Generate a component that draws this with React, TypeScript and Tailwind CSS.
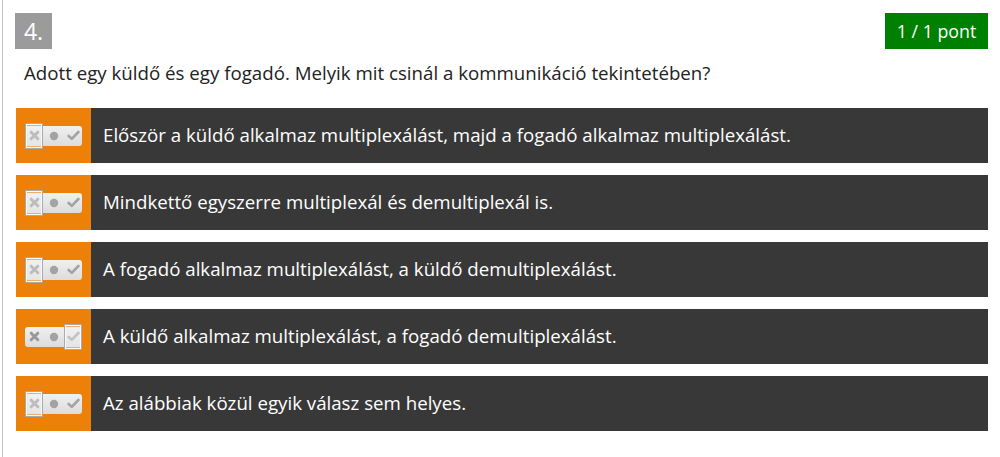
import React from 'react';

type Answer = { text: string; state: 'no' | 'yes' };

const answers: Answer[] = [
  { text: 'Először a küldő alkalmaz multiplexálást, majd a fogadó alkalmaz multiplexálást.', state: 'no' },
  { text: 'Mindkettő egyszerre multiplexál és demultiplexál is.', state: 'no' },
  { text: 'A fogadó alkalmaz multiplexálást, a küldő demultiplexálást.', state: 'no' },
  { text: 'A küldő alkalmaz multiplexálást, a fogadó demultiplexálást.', state: 'yes' },
  { text: 'Az alábbiak közül egyik válasz sem helyes.', state: 'no' },
];

function Cross() {
  return (
    <svg width="11" height="11" viewBox="0 0 11 11">
      <path d="M2.2 2.2 L8.8 8.8 M8.8 2.2 L2.2 8.8" stroke="#999" strokeWidth="3" strokeLinecap="round" />
    </svg>
  );
}

function Dot() {
  return (
    <svg width="10" height="10" viewBox="0 0 10 10">
      <circle cx="5" cy="5" r="4.2" fill="#a3a3a3" />
    </svg>
  );
}

function Check() {
  return (
    <svg width="13" height="11" viewBox="0 0 13 11">
      <path d="M1.6 6 L4.8 8.8 L11.4 2" stroke="#a3a3a3" strokeWidth="2.6" fill="none" strokeLinecap="round" strokeLinejoin="round" />
    </svg>
  );
}

function Toggle({ state }: { state: 'no' | 'yes' }) {
  return (
    <div className="relative w-[57px] h-[20px] rounded-[3px] bg-gradient-to-b from-[#f0f0f0] to-[#dcdcdc] flex items-center">
      <div className="w-[18px] flex justify-center"><Cross /></div>
      <div className="flex-1 flex justify-center"><Dot /></div>
      <div className="w-[18px] flex justify-center"><Check /></div>
      <div
        className={`absolute top-[-3px] h-[26px] w-[18px] border border-[#a9a9a9] bg-[#f2f2f2]/40 shadow-[inset_0_0_0_1px_#fafafa] ${state === 'no' ? 'left-0' : 'right-0'}`}
      />
    </div>
  );
}

export default function App() {
  return (
    <div className="min-h-[457px] w-[1000px] bg-white" style={{ fontFamily: '"Open Sans", "Noto Sans", sans-serif' }}>
      <div className="ml-[2px] min-h-[457px] border-l border-[#c4c4c4] pl-[13px] pr-[12px] pt-[13px]">
        <div className="flex items-center justify-between">
          <div className="ml-[-1px] w-[37px] h-[36px] bg-[#9b9b9b] text-white text-[23px] flex items-center justify-center">4.</div>
          <div className="w-[103px] h-[36px] bg-[#008000] text-white text-[17.8px] flex items-center justify-center">1 / 1 pont</div>
        </div>
        <p className="mt-[11px] pl-[8px] text-[18.7px] leading-[26px] text-[#222]">
          Adott egy küldő és egy fogadó. Melyik mit csinál a kommunikáció tekintetében?
        </p>
        <div className="mt-[22px] flex flex-col gap-[12px]">
          {answers.map((a) => (
            <div key={a.text} className="flex h-[55px]">
              <div className="w-[75px] bg-[#ec8008] flex items-center pl-[9px]">
                <Toggle state={a.state} />
              </div>
              <div className="flex-1 bg-[#383838] flex items-center pl-[12px] text-white text-[18.7px]">{a.text}</div>
            </div>
          ))}
        </div>
      </div>
    </div>
  );
}
